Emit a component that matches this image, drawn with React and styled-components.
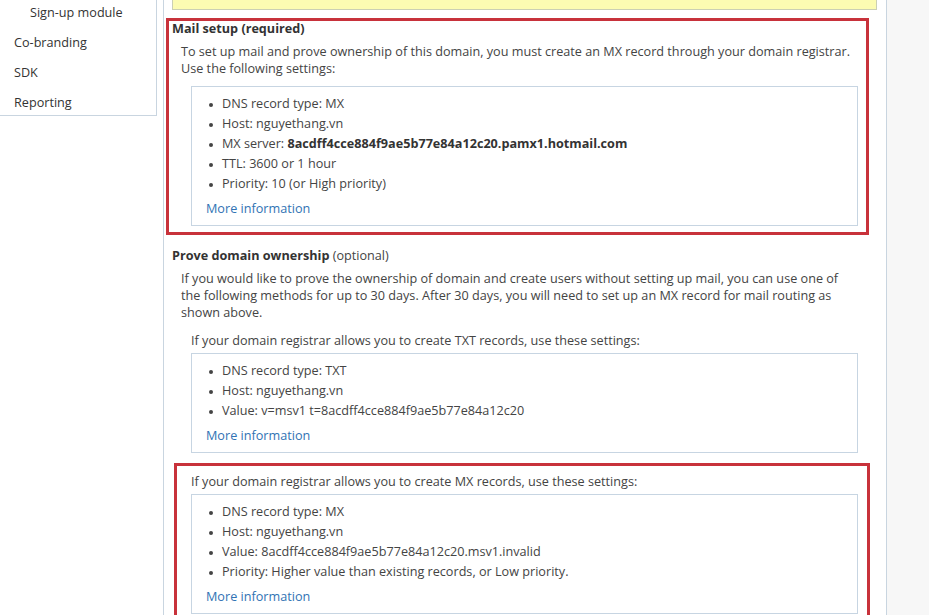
import React from "react";
import styled, { createGlobalStyle } from "styled-components";

const GlobalStyle = createGlobalStyle`
  html, body { margin: 0; padding: 0; background: #fff; }
  body {
    font-family: "Open Sans", "Noto Sans", "Liberation Sans", sans-serif;
    font-size: 12.65px;
    color: #444;
    overflow: hidden;
  }
`;

const Viewport = styled.div`
  height: 100vh;
  overflow: hidden;
`;

const Page = styled.div`
  display: flex;
  align-items: stretch;
`;

const Sidebar = styled.nav`
  width: 156px;
  flex: none;
  align-self: flex-start;
  border-right: 1px solid #c9d5e0;
  border-bottom: 1px solid #c9d5e0;
  background: #fff;
`;

const NavList = styled.ul`
  list-style: none;
  margin: 0;
  padding: 0;
`;

const NavItem = styled.li`
  padding: 8px 0 4px ${(p) => (p.$sub ? 30 : 14)}px;
  line-height: 18px;
  color: #333;
  white-space: nowrap;
  &:first-child {
    padding-top: 3px;
  }
`;

const Panel = styled.main`
  width: 724px;
  box-sizing: border-box;
  flex: none;
  margin-left: 6px;
  border-left: 1px solid #c9d5e0;
  border-right: 1px solid #c9d5e0;
  background: #fff;
  padding: 0 9px 40px 8px;
  display: flex;
  flex-direction: column;
`;

const Filler = styled.div`
  flex: 1;
  background: #f7f7f7;
`;

const NoticeEdge = styled.div`
  height: 9px;
  background: #fcfcb2;
  border: 1px solid #cbd0b4;
  border-top: none;
`;

const Highlight = styled.div`
  display: flex;
  flex-direction: column;
  border: 3px solid #c8323b;
  padding: ${(p) => p.$pad};
  margin: ${(p) => p.$margin};
`;

const Section = styled.section`
  display: flex;
  flex-direction: column;
  margin: ${(p) => p.$margin || "0"};
`;

const Heading = styled.h2`
  margin: 0;
  font-size: 12.65px;
  line-height: 15px;
  font-weight: 700;
  color: #333;
`;

const Note = styled.span`
  font-weight: 400;
  color: #444;
`;

const Para = styled.p`
  margin: ${(p) => p.$gap}px 0 0 9px;
  line-height: 17.25px;
  white-space: nowrap;
`;

const Subsection = styled.div`
  display: flex;
  flex-direction: column;
  margin: ${(p) => p.$gap}px 0 0 ${(p) => (p.$indent ?? 19)}px;
`;

const SubText = styled.p`
  margin: 0 0 4px;
  line-height: 17px;
  white-space: nowrap;
`;

const InfoBox = styled.div`
  border: 1px solid #c7d5e2;
  padding: 6px 0 7px;
`;

const Settings = styled.ul`
  list-style: none;
  margin: 0;
  padding: 0;
`;

const Setting = styled.li`
  padding-left: 17px;
  line-height: 20px;
  white-space: nowrap;
  &::before {
    content: "";
    display: inline-block;
    width: 4px;
    height: 4px;
    border-radius: 50%;
    background: #444;
    margin-right: 9px;
    vertical-align: 1px;
  }
`;

const Strong = styled.strong`
  font-weight: 700;
  color: #333;
`;

const MoreLink = styled.a`
  display: block;
  align-self: flex-start;
  margin: 5px 0 0 14px;
  line-height: 20px;
  color: #3173b4;
  text-decoration: none;
`;

const SettingsBox = ({ items }) => (
  <InfoBox>
    <Settings>
      {items.map((item, i) => (
        <Setting key={i}>{item}</Setting>
      ))}
    </Settings>
    <MoreLink href="#">More information</MoreLink>
  </InfoBox>
);

const mailItems = [
  "DNS record type: MX",
  "Host: nguyethang.vn",
  <>
    MX server: <Strong>8acdff4cce884f9ae5b77e84a12c20.pamx1.hotmail.com</Strong>
  </>,
  "TTL: 3600 or 1 hour",
  "Priority: 10 (or High priority)",
];

const txtItems = [
  "DNS record type: TXT",
  "Host: nguyethang.vn",
  "Value: v=msv1 t=8acdff4cce884f9ae5b77e84a12c20",
];

const mxItems = [
  "DNS record type: MX",
  "Host: nguyethang.vn",
  "Value: 8acdff4cce884f9ae5b77e84a12c20.msv1.invalid",
  "Priority: Higher value than existing records, or Low priority.",
];

const navItems = [
  { label: "Sign-up module", sub: true },
  { label: "Co-branding" },
  { label: "SDK" },
  { label: "Reporting" },
];

export default function App() {
  return (
    <Viewport>
      <GlobalStyle />
      <Page>
        <Sidebar>
          <NavList>
            {navItems.map((n) => (
              <NavItem key={n.label} $sub={n.sub}>
                {n.label}
              </NavItem>
            ))}
          </NavList>
        </Sidebar>
        <Panel>
          <NoticeEdge />
          <Highlight $margin="8px 8px -9px -6px" $pad="0 8px 6px 3px">
            <Section>
              <Heading>Mail setup (required)</Heading>
              <Para $gap={7}>
                To set up mail and prove ownership of this domain, you must create an MX record through your domain registrar.
                <br />
                Use the following settings:
              </Para>
              <Subsection $gap={8}>
                <SettingsBox items={mailItems} />
              </Subsection>
            </Section>
          </Highlight>
          <Section $margin="22px 19px 0 0">
            <Heading>
              Prove domain ownership <Note>(optional)</Note>
            </Heading>
            <Para $gap={7}>
              If you would like to prove the ownership of domain and create users without setting up mail, you can use one of
              <br />
              the following methods for up to 30 days. After 30 days, you will need to set up an MX record for mail routing as
              <br />
              shown above.
            </Para>
            <Subsection $gap={11}>
              <SubText>If your domain registrar allows you to create TXT records, use these settings:</SubText>
              <SettingsBox items={txtItems} />
            </Subsection>
            <Highlight $margin="10px -12px 0 2px" $pad="7px 9px 8px 14px">
              <Subsection $gap={0} $indent={0}>
                <SubText>If your domain registrar allows you to create MX records, use these settings:</SubText>
                <SettingsBox items={mxItems} />
              </Subsection>
            </Highlight>
          </Section>
        </Panel>
        <Filler />
      </Page>
    </Viewport>
  );
}
